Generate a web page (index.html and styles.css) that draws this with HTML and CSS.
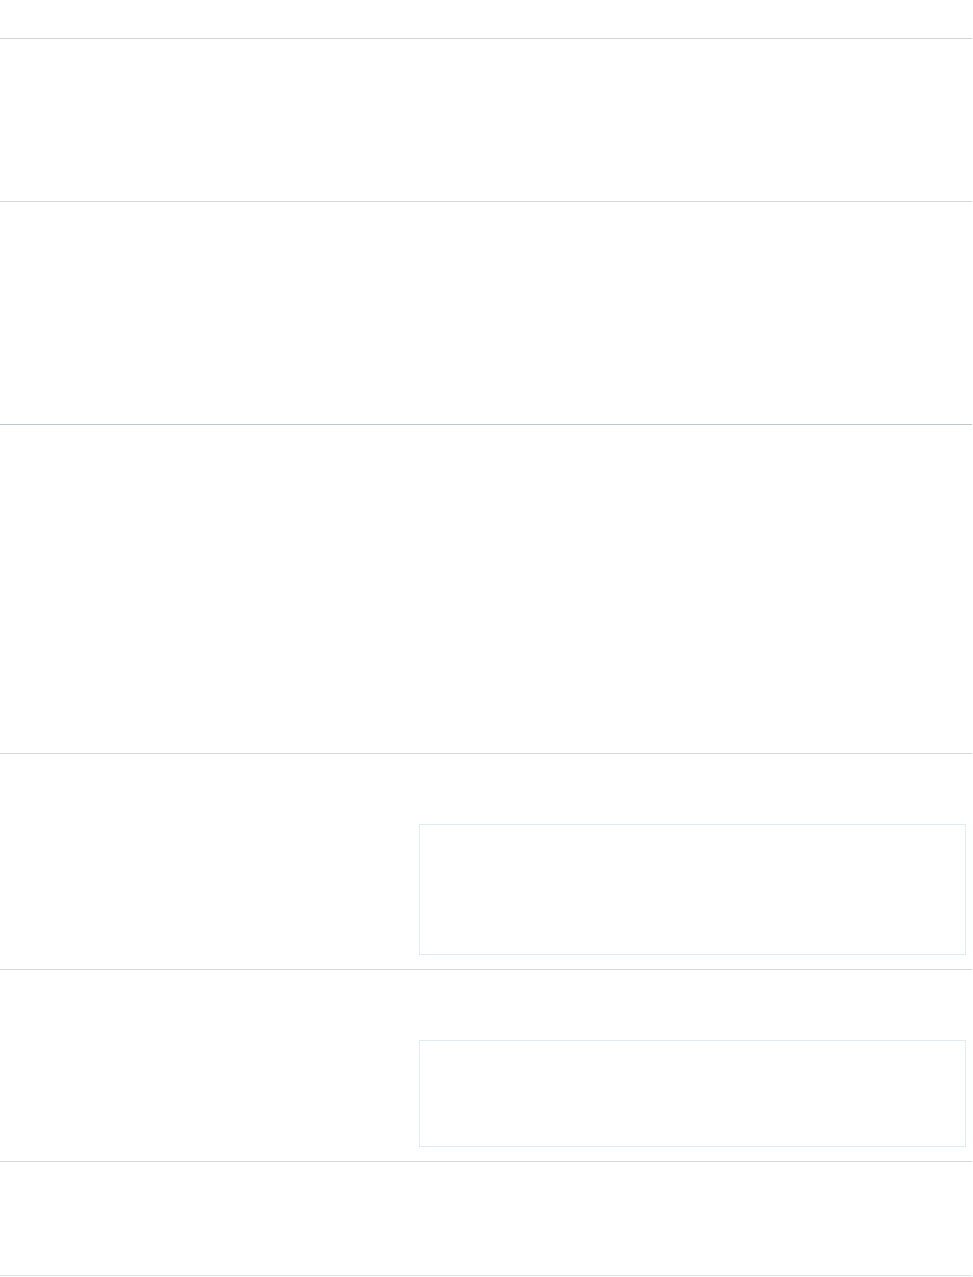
FILE: index.html
```html
<!DOCTYPE html>
<html lang="en">
<head>
<meta charset="utf-8">
<title>Form</title>
<link rel="stylesheet" href="styles.css">
</head>
<body>
<main class="page">
  <div class="top"></div>
  <section class="row row-a"></section>
  <section class="row row-b"></section>
  <section class="row row-c"></section>
  <section class="row row-field">
    <div class="label-col"></div>
    <div class="field-box field-box-tall"></div>
  </section>
  <section class="row row-field">
    <div class="label-col"></div>
    <div class="field-box field-box-short"></div>
  </section>
  <section class="row row-d"></section>
</main>
</body>
</html>
```

FILE: styles.css
```css
html, body {
  margin: 0;
  padding: 0;
  background: #ffffff;
  font-family: "Liberation Sans", Arial, sans-serif;
}

.page {
  width: 972px;
  display: flex;
  flex-direction: column;
}

.top {
  height: 38px;
  border-bottom: 1px solid #c9d6dd;
}

.row {
  border-bottom: 1px solid #d3dadf;
  box-sizing: border-box;
}

.row-a { height: 163px; }
.row-b { height: 223px; border-bottom-color: #b9c9d2; }
.row-c { height: 329px; }
.row-d { height: 114px; border-bottom-color: #dde3e6; }

.row-field {
  display: grid;
  grid-template-columns: 419px 547px;
  padding: 70px 0 14px;
}

.field-box {
  border: 1px solid #dcedf6;
  box-sizing: border-box;
}

.field-box-tall { height: 131px; }
.field-box-short { height: 107px; }
```
